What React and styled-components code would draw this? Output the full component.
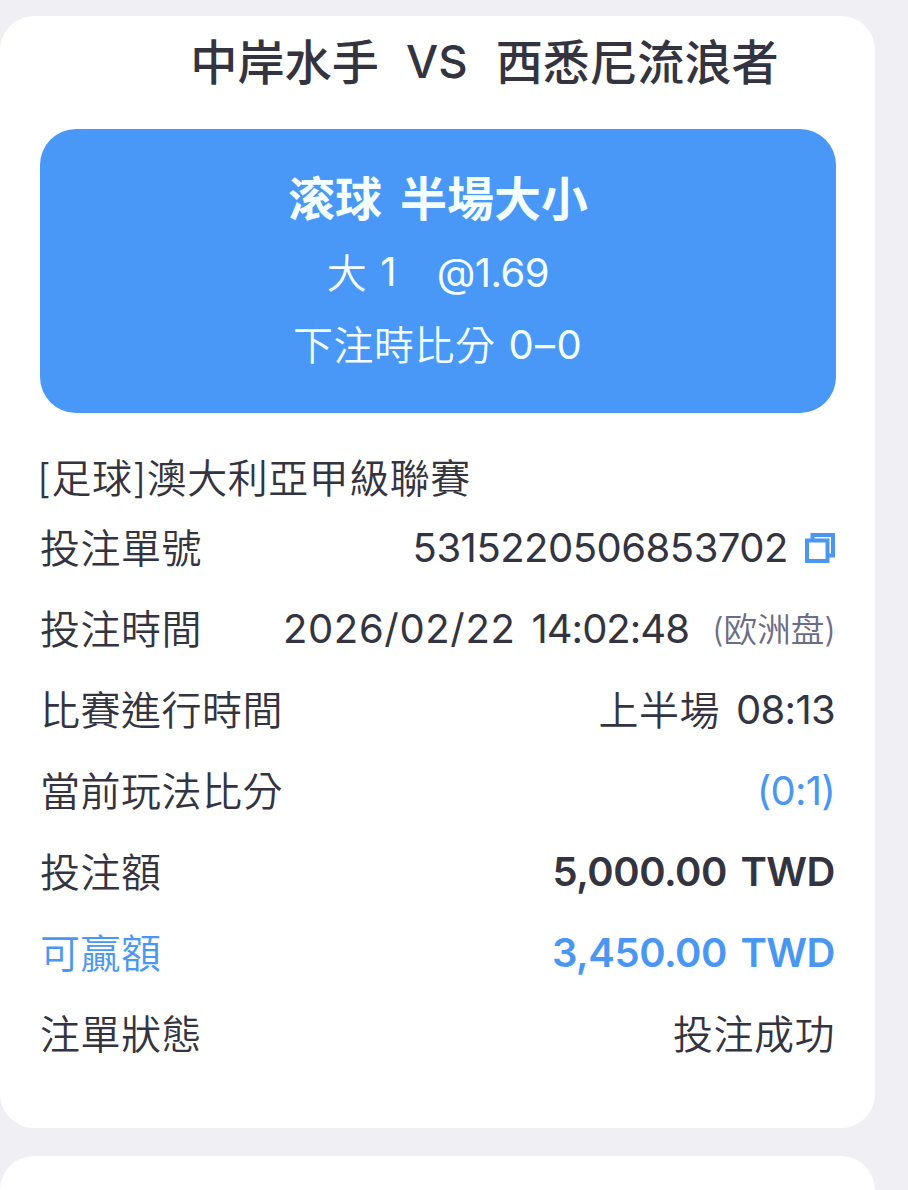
import React from 'react'
import styled, { createGlobalStyle } from 'styled-components'

const rows = [
  { label: '投注單號', value: '5315220506853702', track: -0.5, copy: true },
  { label: '投注時間', date: '2026/02/22', value: '14:02:48', track: -1, note: '(欧洲盘)' },
  { label: '比賽進行時間', half: '上半場', value: '08:13', track: -0.7 },
  { label: '當前玩法比分', value: '(0:1)', track: -0.8, tone: 'blue' },
  { label: '投注額', value: '5,000.00 TWD', track: -0.5, strong: true },
  { label: '可贏額', value: '3,450.00 TWD', track: -0.5, strong: true, tone: 'blue', labelTone: 'blue' },
  { label: '注單狀態', half: '投注成功' },
]

const CopyIcon = () => (
  <Icon viewBox="0 0 30 30" fill="none">
    <path d="M7.5 6V2H28V22.5H24" />
    <path d="M2 7.5H22.5V28H2Z" />
  </Icon>
)

const App = () => {
  return (
    <Page>
      <GlobalStyle />
      <Card>
        <Teams>
          <span>中岸水手</span>
          <Versus>VS</Versus>
          <span>西悉尼流浪者</span>
        </Teams>
        <Pick>
          <PickTitle>
            <span>滚球</span>
            <span>半場大小</span>
          </PickTitle>
          <PickOdds>
            <Han>大</Han>
            <Num $track={0}>1</Num>
            <Odds>@1.69</Odds>
          </PickOdds>
          <PickScore>
            <Han>下注時比分</Han>
            <Num $track={1.4}>0–0</Num>
          </PickScore>
        </Pick>
        <League>[足球]澳大利亞甲級聯賽</League>
        {rows.map((row) => (
          <Row key={row.label}>
            <Han $tone={row.labelTone}>{row.label}</Han>
            <Value $tone={row.tone}>
              {row.half && <Han>{row.half}</Han>}
              {row.date && <Num $track={0.65}>{row.date}</Num>}
              {row.value && <Num $track={row.track} $strong={row.strong}>{row.value}</Num>}
              {row.copy && <CopyIcon />}
              {row.note && <Note>{row.note}</Note>}
            </Value>
          </Row>
        ))}
      </Card>
      <Card $next />
    </Page>
  )
}

export default App

const colors = {
  text: '#343440',
  blue: '#4a97f3',
}

const GlobalStyle = createGlobalStyle`
  body {
    margin: 0;
    background: #f0eff4;
  }
  * {
    box-sizing: border-box;
  }
`

const Page = styled.div`
  display: flex;
  flex-direction: column;
  gap: 28px;
  width: 908px;
  height: 1190px;
  padding-top: 16px;
  overflow: hidden;
  background: #f0eff4;
  color: ${colors.text};
  font-family: Inter, "Noto Sans CJK TC", sans-serif;
  font-size: 40px;
  font-weight: 350;
`

const Card = styled.div`
  flex: none;
  width: 875px;
  height: ${(p) => (p.$next ? '120px' : '1112px')};
  padding: 0 39px 0 40px;
  border-radius: 34px;
  background: #fff;
`

const Teams = styled.div`
  display: flex;
  justify-content: center;
  align-items: center;
  height: 92px;
  padding: 0 0 5px 93px;
  font-size: 47.2px;
  font-weight: 500;
  white-space: nowrap;
`

const Versus = styled.span`
  margin: 0 28px 0 27px;
  padding-top: 3px;
  font-size: 45.5px;
  font-weight: 500;
`

const Pick = styled.div`
  display: flex;
  flex-direction: column;
  align-items: center;
  height: 284px;
  margin-top: 21px;
  padding-top: 34px;
  border-radius: 36px;
  background: #4998f8;
  color: #f4ffff;
`

const PickLine = styled.div`
  display: flex;
  align-items: center;
  white-space: nowrap;
`

const PickTitle = styled(PickLine)`
  gap: 18px;
  height: 72px;
  padding-bottom: 7px;
  font-size: 47px;
  font-weight: 700;
`

const PickOdds = styled(PickLine)`
  gap: 13px;
  height: 76px;
`

const PickScore = styled(PickLine)`
  gap: 13px;
  height: 69px;
`

// han glyphs sit lower than the digits, the padding brings them level
const Han = styled.span`
  padding-bottom: 5px;
  color: ${(p) => (p.$tone ? colors[p.$tone] : 'inherit')};
  letter-spacing: 0.5px;
`

const Num = styled.span`
  padding-bottom: 3px;
  font-weight: ${(p) => (p.$strong ? 600 : 400)};
  letter-spacing: ${(p) => p.$track}px;
  word-spacing: 4px;
`

const Odds = styled.span`
  margin-left: 27px;
  padding-bottom: 2px;
  font-weight: 400;
  letter-spacing: -0.5px;
`

const League = styled.div`
  display: flex;
  align-items: center;
  height: 60px;
  margin: 35px 0 0 -3px;
  padding-bottom: 4px;
  letter-spacing: 0.5px;
  white-space: nowrap;
`

const Row = styled.div`
  display: flex;
  justify-content: space-between;
  align-items: center;
  height: 81px;
  padding-right: 1px;
  white-space: nowrap;
`

const Value = styled.div`
  display: flex;
  align-items: center;
  gap: 16px;
  color: ${(p) => colors[p.$tone || 'text']};
`

const Note = styled.span`
  margin: 0 -1px 0 7px;
  padding-bottom: 4px;
  color: #6b6c85;
  font-size: 33.6px;
`

const Icon = styled.svg`
  width: 30px;
  height: 30px;
  margin: 0 0 1px 1px;
  stroke: #4a97f3;
  stroke-width: 4;
`
